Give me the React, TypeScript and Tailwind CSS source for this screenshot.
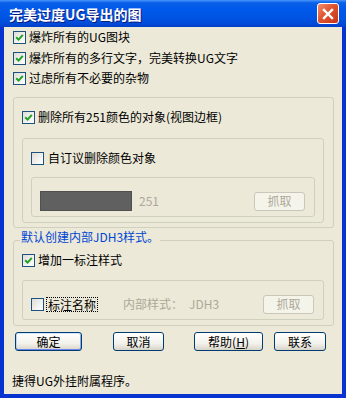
import React from 'react'

const font = "font-['Noto_Sans_CJK_SC',sans-serif]"

function Check({ checked }: { checked?: boolean }) {
  return (
    <span className="w-[13px] h-[13px] shrink-0 border border-[#1c5180] bg-[linear-gradient(135deg,#dcdcd7,#f6f6f4_70%,#ffffff)] flex items-center justify-center">
      {checked && (
        <svg width="9" height="9" viewBox="0 0 9 9">
          <path d="M1.2 4.2 L3.6 6.6 L7.8 1.8" stroke="#21a121" strokeWidth="2" fill="none" />
        </svg>
      )}
    </span>
  )
}

function Row({ checked, children, gap }: { checked?: boolean; children: React.ReactNode; gap?: string }) {
  return (
    <div className="flex items-center h-[20px]">
      <Check checked={checked} />
      <span className={gap ?? 'ml-[3px]'}>{children}</span>
    </div>
  )
}

function Btn({ children, className, def }: { children: React.ReactNode; className: string; def?: boolean }) {
  return (
    <div
      className={
        'h-[19px] rounded-[3px] border border-[#003c74] bg-[linear-gradient(to_bottom,#ffffff,#f3f2ec_60%,#d8d4c8)] flex items-center justify-center text-black ' +
        (def ? 'shadow-[inset_0_1px_0_#cee7ff,inset_0_-1px_0_#6982ee,inset_1px_0_0_#bcd4f6,inset_-1px_0_0_#89ade4] ' : '') +
        className
      }
    >
      {children}
    </div>
  )
}

function DisabledBtn({ className }: { className: string }) {
  return (
    <div className={'h-[19px] w-[51px] rounded-[3px] border border-[#c9c7ba] bg-[#f5f4ea] flex items-center justify-center text-[#aca899] ' + className}>
      抓取
    </div>
  )
}

export default function App() {
  return (
    <div className={`w-[346px] h-[398px] flex flex-col text-[12px] leading-[16px] text-black ${font}`}>
      {/* title bar */}
      <div className="h-[27px] shrink-0 flex items-center pl-[9px] pr-[7px] bg-[linear-gradient(to_bottom,#4a96fb_0%,#0a60e8_10%,#0058ea_35%,#0054e3_65%,#004ad8_88%,#0040c6_100%)]">
        <span className="text-white font-bold text-[14px] leading-[18px] [text-shadow:1px_1px_0_#0a1a7a]">完美过度UG导出的图</span>
        <div className="ml-auto w-[22px] h-[21px] rounded-[3px] border border-white bg-[linear-gradient(135deg,#f0906e,#e0532f_45%,#c4361a)] flex items-center justify-center">
          <svg width="12" height="12" viewBox="0 0 12 12">
            <path d="M2 2 L10 10 M10 2 L2 10" stroke="white" strokeWidth="2.4" strokeLinecap="square" />
          </svg>
        </div>
      </div>

      {/* body */}
      <div className="flex-1 flex flex-col bg-[#ece9d8] border-l-[4px] border-r-[4px] border-b-[4px] border-[#0733d0] pl-[9px] pr-[8px]">
        <Row checked>爆炸所有的UG图块</Row>
        <div className="mt-px">
          <Row checked>爆炸所有的多行文字，完美转换UG文字</Row>
        </div>
        <Row checked>过虑所有不必要的杂物</Row>

        {/* group 1 */}
        <div className="mt-[9px] border border-[#d0d0bf] rounded-[3px] pb-[4px]">
          <div className="ml-[8px] mt-[9px]">
            <Row checked>删除所有251颜色的对象(视图边框)</Row>
          </div>
          <div className="mt-[11px] ml-[8px] mr-[9px] border border-[#d0d0bf] rounded-[3px] pb-[5px]">
            <div className="ml-[8px] mt-[9px]">
              <Row gap="ml-[4px]">自订议删除颜色对象</Row>
            </div>
            <div className="mt-[9px] mx-[8px] h-[40px] border border-[#d0d0bf] rounded-[3px] flex items-center pt-[13px] pb-[5px]">
              <div className="ml-[8px] w-[92px] h-[20px] bg-[#606060] border border-[#505050]" />
              <span className="ml-[7px] text-[#aca899]">251</span>
              <DisabledBtn className="ml-auto mr-[9px]" />
            </div>
          </div>
        </div>

        {/* group 2 */}
        <fieldset className="mt-[6px] border border-[#d0d0bf] rounded-[3px] pb-[5px]">
          <legend className="ml-[6px] px-[1px] leading-[12px] h-[12px]">
            <span className="relative -top-[3px] text-[#0046d5]">默认创建内部JDH3样式。</span>
          </legend>
          <div className="ml-[8px] mt-[4px]">
            <Row checked>增加一标注样式</Row>
          </div>
          <div className="mt-[10px] ml-[8px] mr-[9px] h-[40px] border border-[#d0d0bf] rounded-[3px] pt-[14px]">
            <div className="flex items-center h-[18px] pl-[8px]">
              <Check />
              <span className="ml-[2px] border border-dotted border-black px-px leading-[13px]">标注名称</span>
              <span className="ml-[25px] text-[#aca899]">内部样式：</span>
              <span className="ml-[6px] text-[#aca899]">JDH3</span>
              <DisabledBtn className="ml-auto mr-[9px]" />
            </div>
          </div>
        </fieldset>

        {/* buttons */}
        <div className="mt-[6px] flex items-center pl-[2px]">
          <Btn className="w-[67px]" def>确定</Btn>
          <Btn className="w-[51px] ml-[31px]">取消</Btn>
          <Btn className="w-[69px] ml-[30px]">
            帮助(<span className="underline">H</span>)
          </Btn>
          <Btn className="w-[52px] ml-[11px]">联系</Btn>
        </div>

        <div className="mt-[22px] -ml-px">捷得UG外挂附属程序。</div>
      </div>
    </div>
  )
}
